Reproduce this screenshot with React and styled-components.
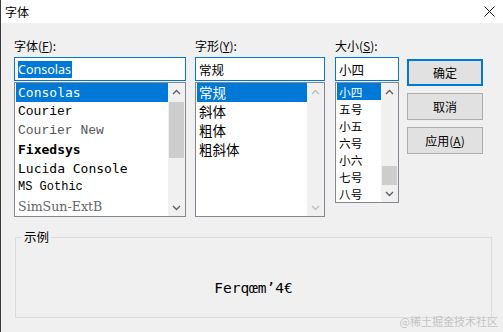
import React from "react";
import styled, { createGlobalStyle, css } from "styled-components";

const GlobalStyle = createGlobalStyle`
  html, body {
    margin: 0;
    padding: 0;
    background: #f0f0f0;
  }
  body {
    font-family: "Noto Sans CJK SC", "Noto Sans", sans-serif;
    font-size: 12px;
    color: #000;
  }
`;

const fontItems = [
  { name: "Consolas", family: '"DejaVu Sans Mono", monospace', size: 13 },
  { name: "Courier", family: '"Liberation Mono", monospace', size: 13 },
  { name: "Courier New", family: '"Liberation Mono", monospace', size: 13, color: "#555" },
  { name: "Fixedsys", family: '"DejaVu Sans Mono", monospace', size: 13, weight: 700 },
  { name: "Lucida Console", family: '"DejaVu Sans Mono", monospace', size: 13 },
  { name: "MS Gothic", family: '"Liberation Mono", monospace', size: 12 },
  { name: "SimSun-ExtB", family: '"DejaVu Serif", serif', size: 12.6, color: "#666" },
];

const styleItems = ["常规", "斜体", "粗体", "粗斜体"];
const sizeItems = ["小四", "五号", "小五", "六号", "小六", "七号", "八号"];

const Window = styled.div`
  position: relative;
  width: 503px;
  height: 332px;
  overflow: hidden;
  background: #f0f0f0;
  border-left: 1px solid #3a3a3a;
  box-sizing: border-box;
`;

const TitleBar = styled.div`
  height: 23px;
  background: #fff;
  display: flex;
  align-items: center;
  justify-content: space-between;
  padding: 0 8px 0 4px;
  font-size: 12px;
`;

const Body = styled.div`
  padding: 16px 0 0 13px;
`;

const Columns = styled.div`
  display: flex;
  align-items: flex-start;
`;

const Column = styled.div`
  width: ${(p) => p.$width}px;
  margin-right: ${(p) => p.$gap || 0}px;
  display: flex;
  flex-direction: column;
`;

const Label = styled.div`
  height: 14px;
  line-height: 14px;
  margin-bottom: 4px;
  font-size: 12px;
  white-space: nowrap;
  u {
    text-decoration-thickness: 1px;
    text-underline-offset: 1px;
  }
`;

const Input = styled.div`
  height: 24px;
  box-sizing: border-box;
  border: 1px solid #0078d7;
  background: #fff;
  display: flex;
  align-items: center;
  padding-left: 3px;
  font-size: 12.5px;
  font-family: ${(p) => (p.$latin ? '"Noto Sans", sans-serif' : '"Noto Sans CJK SC", sans-serif')};
`;

const Selected = styled.span`
  background: #0078d7;
  color: #fff;
  line-height: 17px;
  padding: 0 1px 0 0;
`;

const List = styled.div`
  margin-top: 1px;
  box-sizing: border-box;
  border: 1px solid #828790;
  background: #fff;
  display: flex;
  height: ${(p) => p.$rows * p.$rowHeight + 2}px;
`;

const Items = styled.div`
  flex: 1;
  padding-left: 1px;
  overflow: hidden;
`;

const Item = styled.div`
  height: ${(p) => p.$h}px;
  line-height: ${(p) => p.$h}px;
  padding-left: 2px;
  white-space: nowrap;
  overflow: hidden;
  font-family: ${(p) => p.$family || '"Noto Sans CJK SC", sans-serif'};
  font-size: ${(p) => p.$size}px;
  font-weight: ${(p) => p.$weight || 400};
  color: ${(p) => p.$color || "#000"};
  ${(p) =>
    p.$active &&
    css`
      background: #0078d7;
      color: #fff;
    `}
`;

const ScrollBar = styled.div`
  width: 17px;
  background: #f0f0f0;
  display: flex;
  flex-direction: column;
  align-items: center;
`;

const ArrowBox = styled.div`
  height: 17px;
  width: 17px;
  display: flex;
  align-items: center;
  justify-content: center;
`;

const Track = styled.div`
  flex: 1;
  width: 100%;
  display: flex;
  flex-direction: column;
  padding-top: ${(p) => p.$offset}px;
  box-sizing: border-box;
`;

const Thumb = styled.div`
  margin: 0 auto;
  width: 15px;
  height: ${(p) => p.$h}px;
  background: #cdcdcd;
`;

const Buttons = styled.div`
  width: 76px;
  padding-top: 20px;
  display: flex;
  flex-direction: column;
  gap: 7px;
`;

const Button = styled.div`
  height: 27px;
  box-sizing: border-box;
  background: #e1e1e1;
  border: 1px solid #adadad;
  display: flex;
  align-items: center;
  justify-content: center;
  font-size: 12px;
  ${(p) =>
    p.$primary &&
    css`
      border: 2px solid #0078d7;
    `}
`;

const Group = styled.fieldset`
  margin: 13px 0 0 1px;
  width: 477px;
  height: 88px;
  box-sizing: border-box;
  padding: 0;
  border: 1px solid #dcdcdc;
  min-width: 0;
  display: flex;
  align-items: center;
  justify-content: center;
`;

const Legend = styled.legend`
  margin-left: 6px;
  padding: 0 2px;
  font-size: 12.5px;
  line-height: 14px;
`;

const Sample = styled.div`
  font-family: "DejaVu Sans Mono", monospace;
  font-size: 14.5px;
  padding-top: 6px;
  margin-top: 8px;
`;

const Watermark = styled.div`
  position: absolute;
  right: 5px;
  bottom: 3px;
  font-size: 11px;
  color: #c4c4c4;
  font-family: "Noto Sans CJK SC", sans-serif;
`;

const Chevron = ({ up, disabled }) => (
  <svg width="9" height="6" viewBox="0 0 9 6">
    <polyline
      points={up ? "1,5 4.5,1.5 8,5" : "1,1 4.5,4.5 8,1"}
      fill="none"
      stroke={disabled ? "#bfbfbf" : "#606060"}
      strokeWidth="1.4"
    />
  </svg>
);

const Scroll = ({ thumbTop, thumbHeight, disabled }) => (
  <ScrollBar>
    <ArrowBox>
      <Chevron up disabled={disabled} />
    </ArrowBox>
    <Track $offset={thumbTop}>{!disabled && <Thumb $h={thumbHeight} />}</Track>
    <ArrowBox>
      <Chevron disabled={disabled} />
    </ArrowBox>
  </ScrollBar>
);

export default function App() {
  return (
    <>
      <GlobalStyle />
      <Window>
        <TitleBar>
          <span>字体</span>
          <svg width="11" height="11" viewBox="0 0 11 11">
            <path d="M0.5 0.5 L10.5 10.5 M10.5 0.5 L0.5 10.5" stroke="#111" strokeWidth="1" />
          </svg>
        </TitleBar>
        <Body>
          <Columns>
            <Column $width={172} $gap={9}>
              <Label>
                字体(<u>F</u>):
              </Label>
              <Input $latin>
                <Selected>Consolas</Selected>
              </Input>
              <List $rows={7} $rowHeight={19}>
                <Items>
                  {fontItems.map((f, i) => (
                    <Item
                      key={f.name}
                      $h={19}
                      $active={i === 0}
                      $family={f.family}
                      $size={f.size}
                      $weight={f.weight}
                      $color={f.color}
                    >
                      {f.name}
                    </Item>
                  ))}
                </Items>
                <Scroll thumbTop={2} thumbHeight={56} />
              </List>
            </Column>
            <Column $width={130} $gap={10}>
              <Label>
                字形(<u>Y</u>):
              </Label>
              <Input>常规</Input>
              <List $rows={7} $rowHeight={19}>
                <Items>
                  {styleItems.map((s, i) => (
                    <Item key={s} $h={19} $size={13.5} $active={i === 0}>
                      {s}
                    </Item>
                  ))}
                </Items>
                <Scroll disabled />
              </List>
            </Column>
            <Column $width={64} $gap={8}>
              <Label>
                大小(<u>S</u>):
              </Label>
              <Input>小四</Input>
              <List $rows={7} $rowHeight={17}>
                <Items>
                  {sizeItems.map((s, i) => (
                    <Item key={s} $h={17} $size={11.7} $active={i === 0}>
                      {s}
                    </Item>
                  ))}
                </Items>
                <Scroll thumbTop={66} thumbHeight={19} />
              </List>
            </Column>
            <Buttons>
              <Button $primary>确定</Button>
              <Button>取消</Button>
              <Button>
                应用(<u>A</u>)
              </Button>
            </Buttons>
          </Columns>
          <Group>
            <Legend>示例</Legend>
            <Sample>Ferqœm’4€</Sample>
          </Group>
        </Body>
        <Watermark>@稀土掘金技术社区</Watermark>
      </Window>
    </>
  );
}
